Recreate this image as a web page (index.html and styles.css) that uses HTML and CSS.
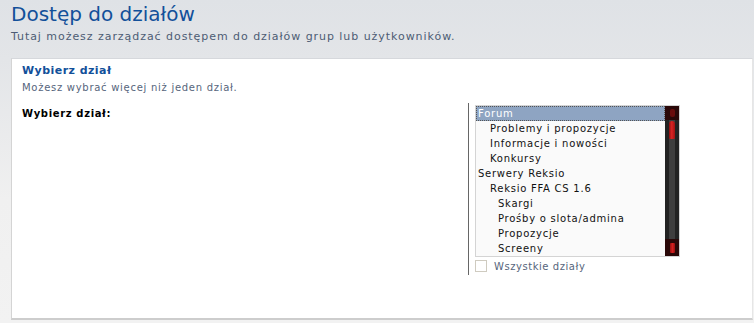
FILE: index.html
```html
<!DOCTYPE html>
<html lang="pl">

<head>
 <meta charset="UTF-8">
 <title>Dostęp do działów</title>
 <link rel="stylesheet" href="styles.css">
</head>

<body>
 <div class="page-head">
  <h1>Dostęp do działów</h1>
  <p>Tutaj możesz zarządzać dostępem do działów grup lub użytkowników.</p>
 </div>

 <div class="panel">
  <h3>Wybierz dział</h3>
  <p class="explain">Możesz wybrać więcej niż jeden dział.</p>

  <div class="row">
   <div class="row-label">Wybierz dział:</div>
   <div class="row-field">
    <div class="select-box">
     <ul class="options">
      <li class="selected">Forum</li>
      <li class="lvl1">Problemy i propozycje</li>
      <li class="lvl1">Informacje i nowości</li>
      <li class="lvl1">Konkursy</li>
      <li>Serwery Reksio</li>
      <li class="lvl1">Reksio FFA CS 1.6</li>
      <li class="lvl2">Skargi</li>
      <li class="lvl2">Prośby o slota/admina</li>
      <li class="lvl2">Propozycje</li>
      <li class="lvl2">Screeny</li>
     </ul>
     <!-- custom skinned scrollbar -->
     <div class="scrollbar">
      <div class="sb-top"><span class="sb-arrow"></span></div>
      <div class="sb-track">
       <div class="sb-thumb"></div>
      </div>
      <div class="sb-bottom"><span class="sb-arrow light"></span></div>
     </div>
    </div>
    <label class="check"><span class="box"></span>Wszystkie działy</label>
   </div>
  </div>
 </div>
</body>

</html>
```

FILE: styles.css
```css
body {
 margin: 0;
 font-family: "DejaVu Sans", Verdana, sans-serif;
 background: linear-gradient(#dfe2e6 0, #e3e5e8 60px, #f0f0f0 200px, #f2f2f2 100%);
 min-height: 323px;
}

.page-head {
 padding: 0 11px;
 height: 58px;
}

h1 {
 margin: 0;
 padding-top: 2px;
 font-size: 20px;
 font-weight: normal;
 color: #12509a;
 line-height: 24px;
}

.page-head p {
 margin: 4px 0 0;
 font-size: 11px;
 letter-spacing: 0.95px;
 color: #4d5c74;
}

.panel {
 margin: 0 1px 0 11px;
 background-color: #fff;
 border-top: 1px solid #d6d8dc;
 border-left: 1px solid #d4d4d4;
 border-bottom: 2px solid #cdcdcd;
 border-right: 1px solid #e6e6e6;
 padding: 5px 10px 45px;
 height: 209px;
}

.panel h3 {
 margin: 0;
 font-size: 11px;
 letter-spacing: 0.45px;
 color: #12509a;
 line-height: 14px;
}

.explain {
 margin: 3px 0 0;
 font-size: 10px;
 letter-spacing: 0.72px;
 color: #56657c;
 line-height: 14px;
}

.row {
 display: flex;
 margin-top: 8px;
}

.row-label {
 width: 446px;
 font-size: 10px;
 font-weight: bold;
 letter-spacing: 0.65px;
 color: #000;
 padding-top: 5px;
}

.row-field {
 border-left: 1px solid #666;
 padding: 2px 0 0 6px;
 height: 170px;
}

.select-box {
 display: flex;
 width: 203px;
 height: 150px;
 border: 1px solid #d4d4d4;
 background-color: #fafafa;
}

.options {
 list-style: none;
 margin: 0;
 padding: 0;
 flex: 1;
 font-size: 10px;
 letter-spacing: 0.75px;
 color: #111;
}

.options li {
 height: 15px;
 line-height: 15px;
 padding-left: 2px;
 white-space: nowrap;
}

.options li.lvl1 {
 padding-left: 14px;
}

.options li.lvl2 {
 padding-left: 22px;
}

.options li.selected {
 background-color: #8ea4c2;
 color: #fff;
 outline: 1px dotted #555;
 outline-offset: -1px;
}

.scrollbar {
 width: 14px;
 display: flex;
 flex-direction: column;
 background-color: #262626;
}

.sb-top,
.sb-bottom {
 background-color: #2a0808;
 display: flex;
 justify-content: center;
}

.sb-top {
 height: 14px;
 padding-top: 3px;
 box-sizing: border-box;
}

.sb-bottom {
 height: 17px;
 padding-top: 4px;
 box-sizing: border-box;
}

.sb-arrow {
 width: 5px;
 height: 8px;
 border-radius: 2px;
 background-color: #6a0c0c;
}

.sb-arrow.light {
 height: 10px;
 border-radius: 1px;
 background: linear-gradient(90deg, #9a1010, #d42020 50%, #9a1010);
}

.sb-track {
 flex: 1;
 background: linear-gradient(90deg, #222 0, #222 4px, #3e3e3e 4px, #3e3e3e 10px, #222 10px);
 padding-top: 1px;
 display: flex;
 justify-content: center;
}

.sb-thumb {
 width: 6px;
 height: 18px;
 border-radius: 3px 3px 1px 1px;
 background: linear-gradient(90deg, #8c1010, #d82424 45%, #a01212);
}

.check {
 display: flex;
 align-items: center;
 margin-top: 3px;
 font-size: 10px;
 letter-spacing: 0.55px;
 color: #56657c;
}

.check .box {
 width: 10px;
 height: 10px;
 border: 1px solid #cfcbc0;
 background-color: #fff;
 margin-right: 7px;
}
```
